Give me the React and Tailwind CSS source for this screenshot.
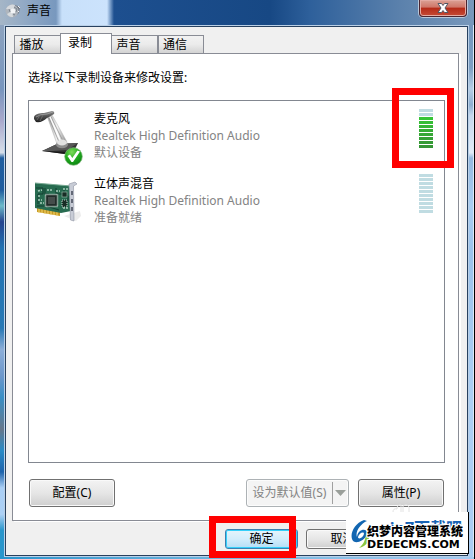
import React from "react";

const DEVICES = [
  { name: "麦克风", driver: "Realtek High Definition Audio", status: "默认设备", level: 8, Icon: MicrophoneIcon },
  { name: "立体声混音", driver: "Realtek High Definition Audio", status: "准备就绪", level: 0, Icon: SoundCardIcon },
];

const TABS = [
  { label: "播放", width: "w-[47px]" },
  { label: "录制", width: "w-[52px]", active: true },
  { label: "声音", width: "w-[47px]" },
  { label: "通信", width: "w-[46px]" },
];

const SEGMENTS = [
  "bg-[#35bd35]",
  "bg-[#35bd35]",
  "bg-[#35c435]",
  "bg-[#35bd35]",
  "bg-[#35b535]",
  "bg-[#35ad35]",
  "bg-[#35a735]",
  "bg-[#35a035]",
  "bg-[#359b35]",
  "bg-[#359535]",
];

function SpeakerIcon() {
  return (
    <svg width="16" height="16" viewBox="0 0 16 16" aria-hidden="true">
      <path d="M10 2 L15 4 L14 10 L9 14 Z" fill="#707782" />
      <circle cx="7" cy="8" r="6.5" fill="#aeb5bd" />
      <path d="M1 6 A7 7 0 0 1 10 2 L8 7 Z" fill="#d6d9dd" />
      <path d="M2 11 L7 8 L8 14 A6 6 0 0 1 2 11" fill="#d6dadd" />
      <circle cx="8" cy="8" r="2.5" fill="#f2f4f6" />
      <path d="M9 4 L12 6 L11 9 M4 6 L5 9 M8 11 L10 12" stroke="#7d848d" fill="none" />
      <path d="M13 3 L15 5 M13 9 L14 8" stroke="#eceff2" />
    </svg>
  );
}

function MicrophoneIcon() {
  return (
    <svg width="50" height="57" viewBox="0 0 50 57" aria-hidden="true">
      <defs>
        <linearGradient id="arm" x1="0" x2="1">
          <stop offset="0" stopColor="#9a9a9a" />
          <stop offset="0.5" stopColor="#f4f4f4" />
          <stop offset="1" stopColor="#8c8c8c" />
        </linearGradient>
        <linearGradient id="head" x1="0" x2="0" y1="0" y2="1">
          <stop offset="0" stopColor="#909090" />
          <stop offset="0.5" stopColor="#4e4e4e" />
          <stop offset="1" stopColor="#1f1f1f" />
        </linearGradient>
        <radialGradient id="badge" cx="0.4" cy="0.25" r="0.85">
          <stop offset="0" stopColor="#7ddb59" />
          <stop offset="0.5" stopColor="#20aa1d" />
          <stop offset="1" stopColor="#087c10" />
        </radialGradient>
      </defs>
      <path d="M8 42 L23 35 L44 34 L40 42 L31 45 Z" fill="#333" />
      <path d="M8 42 L23 35 L44 34 L33 41 L18 42 Z" fill="#575757" />
      <path d="M8 42 L31 45 L40 42 L31 43 Z" fill="#181818" />
      <path d="M13 7 L17 4 L33 33 L23 35 Z" fill="url(#arm)" stroke="#b2b2b2" strokeWidth="0.5" />
      <path d="M15 9 L25 33 M17 8 L29 32" stroke="#8a8a8a" strokeWidth="0.7" />
      <path d="M16 8 L27 33" stroke="#fff" strokeWidth="1.3" />
      <ellipse cx="28" cy="35.5" rx="6" ry="3.8" fill="#8d8d8d" />
      <ellipse cx="28" cy="33.5" rx="5" ry="3" fill="#e2e2e2" />
      <path d="M0 10 C-1 6 4 4 10 4 L18 2 Q21 2 20 5 L13 9 Q8 14 2 13 Z" fill="url(#head)" />
      <path d="M2 8 Q6 5 13 5 L19 3" stroke="#aaa" fill="none" strokeWidth="0.7" />
      <path d="M3 11 L6 6 M6 12 L9 6" stroke="#777" strokeWidth="0.7" />
      <circle cx="39.5" cy="47.5" r="8.8" fill="url(#badge)" stroke="#80b77b" strokeWidth="0.7" />
      <path d="M33.5 47 L36 45.5 L38.3 49 L43.5 41.5 L46 42.5 L39 53 L37.5 53 Z" fill="#fff" />
    </svg>
  );
}

function SoundCardIcon() {
  return (
    <svg width="50" height="57" viewBox="0 0 50 57" aria-hidden="true">
      <path d="M30 42 L46 37 L47 42 L42 47 Z" fill="#ececec" />
      <path d="M3 33 L26 37 L26 42 L3 38 Z" fill="#c79a25" />
      <path d="M5 34 V39 M8 35 V39 M11 35 V40 M14 36 V40 M17 36 V41 M20 37 V41 M23 37 V42" stroke="#f2d770" />
      <path d="M1 9 L37 12 L37 37 L27 39 L1 34 Z" fill="#276b50" />
      <path d="M1 9 L37 12" stroke="#7aab94" />
      <path d="M2 14 H9 V20 H4 V30 M11 14 V20 H15 M22 14 V20 H30 V16 M3 32 H12 L25 36 M28 22 H34 V28 H28" stroke="#123f31" fill="none" />
      <path d="M4 17 L8 16 M4 22 H7 M4 26 H8 M13 16 H19 M22 17 H26 M29 15 H34 M29 34 H34 M6 29 H10" stroke="#a9cdbb" strokeWidth="1.6" strokeDasharray="2 1" />
      <rect x="11.5" y="20.5" width="12" height="12" fill="#222d2a" stroke="#dce9e2" strokeWidth="1.5" strokeDasharray="1 1" />
      <rect x="14" y="23" width="7" height="7" fill="#454d4b" />
      <rect x="28" y="18" width="5" height="5" fill="#182d25" stroke="#8eb3a2" strokeWidth="0.7" />
      <rect x="28" y="26" width="5" height="7" fill="#182d25" stroke="#c1d6cc" strokeDasharray="1 1" />
      <path d="M35 10 L41 8 L43 10 L39.5 12 L40 47 L36.5 46 Z" fill="#c8ccd6" stroke="#8e93a2" strokeWidth="0.6" />
      <path d="M38 17 V21 M38 25 V29 M38 33 V37" stroke="#4b5160" strokeWidth="1.6" />
    </svg>
  );
}

function LevelMeter({ level, name }) {
  return (
    <div role="meter" aria-label={name} aria-valuemin={0} aria-valuemax={10} aria-valuenow={level} className="mr-[11px] flex w-3.5 flex-col gap-px">
      {SEGMENTS.map((color, i) => (
        <span key={i} className={`h-[3px] ${i >= 10 - level ? color : "bg-[#c0dce2]"}`} />
      ))}
    </div>
  );
}

function PushButton({ children, className = "" }) {
  return (
    <button
      type="button"
      className={`rounded-[3px] border border-[#707070] bg-linear-to-b from-[#f3f3f3] via-[#e6e6e6] to-[#cfcfcf] text-center text-black shadow-[inset_0_0_0_1px_#f9f9f9] ${className}`}
    >
      {children}
    </button>
  );
}

function Watermark() {
  return (
    <div className="absolute right-[5px] bottom-[5px] h-[42px] w-[123px] overflow-hidden border-r border-b border-black bg-white">
      <span className="absolute top-1 left-[30px] text-[16px] leading-6 font-bold whitespace-nowrap text-[#1763b4]">win7下载吧</span>
      <svg className="absolute top-2 left-[5px]" width="28" height="32" viewBox="0 0 28 32" aria-hidden="true">
        <path d="M13 0 C4 3 -1 13 1 19 C3 25 12 22 16 15 C17 12 15 9 11 10 C8 11 6 14 6 17 C4 12 9 4 16 1 Z" fill="#1266b1" />
        <path d="M7 17 C8 13 13 11 13 14 C12 18 7 20 7 17" fill="#fff" />
        <path d="M8 28 C12 25 15 20 15 12 C21 18 17 26 8 28" fill="#8ac63f" />
      </svg>
      <div className="absolute top-[13px] left-[21px] text-black [text-shadow:1px_0_#fff,-1px_0_#fff,0_1px_#fff,0_-1px_#fff,1px_1px_#fff,-1px_-1px_#fff,1px_-1px_#fff,-1px_1px_#fff]">
        <p className="text-[12px] leading-[14px] font-black whitespace-nowrap">织梦内容管理系统</p>
        <p className="font-['DejaVu_Sans',sans-serif] text-[11px] leading-3 font-bold">DEDECMS.COM</p>
      </div>
    </div>
  );
}

export default function App() {
  return (
    <div className="relative flex min-h-screen flex-col overflow-hidden border-r border-black bg-[#2b95cc] font-['Noto_Sans','Noto_Sans_CJK_SC',sans-serif] text-[12px] leading-4 text-black">
      <header className="flex h-[25px] items-start justify-between bg-[linear-gradient(90deg,#a5b6c7_0px,#91a9c5_25px,#7898be_56px,#c8e0fa_62px,#cce3fc_107px,#1d4f8f_114px,#174884_270px,#2e609b_310px,#5b81ac_400px,#7898bb_474px)] pr-[7px] pl-[5px]">
        <div className="flex items-center gap-1.5 pt-[3px]">
          <SpeakerIcon />
          <h1 className="leading-4">声音</h1>
        </div>
        <button type="button" aria-label="关闭" className="flex h-[17px] w-[48px] items-center justify-center rounded-b-[4px] border border-t-0 border-[#4b2530] bg-[linear-gradient(#dba295,#cf7668_45%,#b52b18_50%,#c54a35)] shadow-[inset_0_0_0_1px_#e4aba3,0_0_0_1px_#b8c6d8]">
          <svg width="12" height="10" viewBox="0 0 12 10" aria-hidden="true">
            <path d="M1 0.5 H4.5 L6 2.5 L7.5 0.5 H11 L8 5 L11 9.5 H7.5 L6 7.5 L4.5 9.5 H1 L4 5 Z" fill="#fff" stroke="#535865" />
          </svg>
        </button>
      </header>

      <div className="flex flex-1">
        <div className="w-1 bg-[linear-gradient(#8da3bf_0%,#7795bd_12%,#a9a9cc_18%,#d7dfe9_24%,#205e9f_25%,#1f5c9e_31%,#6dbaca_34%,#25448e_37%,#2273b2_42%,#2879b5_57%,#8caed8_61%,#6c97cb_66%,#398fc5_70%,#66778b_76%,#2a8bc6_80%,#1e64ac_84%,#aacff5_87%,#acd0f4_92%,#2996cc_95%)]" />
        <div className="flex flex-1 border border-[#bad0e7]">
          <div className="flex flex-1 flex-col border border-[#28415f] bg-[#f0f0f0] pt-1.5">
            <div role="tablist" className="ml-2 flex h-5 items-end">
              {TABS.map((tab) =>
                tab.active ? (
                  <button key={tab.label} type="button" role="tab" aria-selected="true" className={`relative z-10 -mx-px -mb-px h-[21px] border border-b-0 border-[#898c95] bg-white pr-3 pb-0.5 text-center leading-4 ${tab.width}`}>
                    {tab.label}
                  </button>
                ) : (
                  <button key={tab.label} type="button" role="tab" aria-selected="false" className={`h-[18px] border border-b-0 border-[#898c95] bg-linear-to-b from-[#f2f2f2] via-[#ebebeb] to-[#d3d3d3] pr-3 text-center leading-4 ${tab.width}`}>
                    {tab.label}
                  </button>
                ),
              )}
            </div>

            <main role="tabpanel" className="mr-2 ml-1.5 flex flex-1 flex-col border border-[#898c95] bg-white pt-4 pr-[13px] pb-[13px] pl-[15px] shadow-[2px_1px_0_#fff]">
              <p id="device-prompt">选择以下录制设备来修改设置:</p>
              <ul aria-labelledby="device-prompt" className="mt-3.5 flex-1 border border-[#828790] pt-2">
                {DEVICES.map(({ name, driver, status, level, Icon }) => (
                  <li key={name} className="flex h-[65px] items-start pl-[5px]">
                    <Icon />
                    <div className="ml-2.5 flex-1 pt-px leading-[17px] text-[#838383]">
                      <p className="text-black">{name}</p>
                      <p>{driver}</p>
                      <p>{status}</p>
                    </div>
                    <LevelMeter level={level} name={name} />
                  </li>
                ))}
              </ul>
              <div className="mt-4 flex px-px">
                <PushButton className="mr-auto h-7 w-[86px]">配置(C)</PushButton>
                <div className="mr-[9px] flex h-7 w-[103px] rounded-[3px] border border-[#adb2b5] bg-[#f4f4f4] text-[#838383] shadow-[inset_0_0_0_1px_#fcfcfc]">
                  <button type="button" disabled className="flex-1 text-center">设为默认值(S)</button>
                  <button type="button" disabled aria-label="更多选项" className="my-0.5 flex w-4 items-center justify-center border-l border-[#a0a0a0]">
                    <svg width="11" height="6" viewBox="0 0 11 6" aria-hidden="true"><path d="M0 0 H11 L5.5 6 Z" fill="#9a9f9a" /></svg>
                  </button>
                </div>
                <PushButton className="h-7 w-[86px]">属性(P)</PushButton>
              </div>
            </main>

            <footer className="flex justify-end gap-2 pt-2 pr-[7px] pb-1.5">
              <button type="button" className="h-5 w-[73px] rounded-[3px] border border-[#3c7fb1] bg-[linear-gradient(#e5f4fb,#d2edfb_50%,#b5def6)] text-center leading-4 shadow-[inset_0_0_0_1px_#35d0fa]">确定</button>
              <PushButton className="h-5 w-[73px]">取消</PushButton>
              <PushButton className="h-5 w-[73px]">应用(A)</PushButton>
            </footer>
          </div>
        </div>
        <div className="w-[5px] border-r border-[#dce9f6] bg-[linear-gradient(#7396bd_0%,#7d9fc3_8%,#b6cee6_12%,#8daed0_15%,#c4d7ed_17%,#e2ecf7_24%,#94b9e0_25%,#a9cdf2_34%,#9bc2eb_43%,#accff4_70%,#aacdf3_100%)]" />
      </div>
      <div className="h-0.5 bg-linear-to-r from-[#2594cd] via-[#72b8e0] to-[#a6ccf2]" />

      <svg className="absolute right-[62px] bottom-[47px]" width="20" height="9" viewBox="0 0 20 9" aria-hidden="true">
        <path d="M1 9 Q1 5 5 6 Q5 1 9 2 V9 M11 9 V3 Q15 0 17 4 V9" fill="none" stroke="#e2e2e2" />
      </svg>
      <Watermark />
      <div className="pointer-events-none absolute top-[88px] right-[20px] h-20 w-[62px] border-7 border-[#ff0000]" />
      <div className="pointer-events-none absolute right-[178px] bottom-px h-[42px] w-[87px] border-7 border-[#ff0000]" />
    </div>
  );
}
